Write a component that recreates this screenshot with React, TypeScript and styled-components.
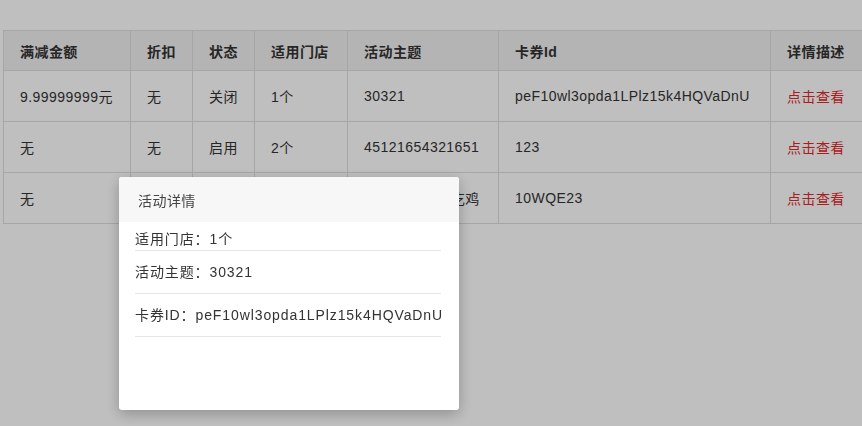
import styled, { createGlobalStyle } from 'styled-components';

const GlobalStyle = createGlobalStyle`
    html, body {
        margin: 0;
        padding: 0;
        background: #ffffff;
        overflow: hidden;
    }
    body {
        font-family: "Liberation Sans", "Noto Sans CJK SC", sans-serif;
        font-size: 14px;
        letter-spacing: 0.45px;
        color: #333333;
    }
`;

const Page = styled.div`
    width: 862px;
    height: 426px;
    padding-top: 30px;
    padding-left: 3px;
    box-sizing: border-box;
    overflow: hidden;
`;

const Table = styled.table`
    border-collapse: collapse;
    table-layout: fixed;
    width: 900px;
`;

const HeadCell = styled.th`
    height: 40px;
    padding: 0 16px;
    text-align: left;
    font-weight: bold;
    background: #f0f0f0;
    border: 1px solid #dedede;
    white-space: nowrap;
    overflow: hidden;
    box-sizing: border-box;
`;

const Cell = styled.td<{ $link?: boolean }>`
    height: 51px;
    padding: 0 16px;
    border: 1px solid #dedede;
    color: ${(p) => (p.$link ? '#e0282a' : '#333333')};
    white-space: nowrap;
    overflow: hidden;
    box-sizing: border-box;
`;

const Mask = styled.div`
    position: fixed;
    inset: 0;
    background: rgba(0, 0, 0, 0.25);
`;

const Modal = styled.div`
    position: fixed;
    left: 119px;
    top: 177px;
    width: 340px;
    height: 233px;
    background: #ffffff;
    border-radius: 3px;
    box-shadow: 0 4px 14px rgba(0, 0, 0, 0.25);
    overflow: hidden;
`;

const ModalHeader = styled.div`
    height: 45px;
    padding: 0 19px;
    display: flex;
    align-items: center;
    background: #f7f7f7;
    color: #444444;
`;

const ModalBody = styled.div`
    padding: 0 18px 0 16px;
`;

const Item = styled.div<{ $first?: boolean }>`
    padding: ${(p) => (p.$first ? '6px 0 0' : '10px 0')};
    line-height: 22px;
    letter-spacing: 0.9px;
    border-bottom: 1px solid #e6e6e6;
    color: #333333;
    white-space: nowrap;
`;

const widths = [127, 62, 62, 93, 151, 272, 133];
const headers = ['满减金额', '折扣', '状态', '适用门店', '活动主题', '卡券Id', '详情描述'];

const rows = [
    ['9.99999999元', '无', '关闭', '1个', '30321', 'peF10wl3opda1LPlz15k4HQVaDnU'],
    ['无', '无', '启用', '2个', '45121654321651', '123'],
    ['无', '无', '启用', '1个', '大吉大利今晚吃鸡', '10WQE23'],
];

export default function App() {
    return (
        <>
            <GlobalStyle />
            <Page>
                <Table>
                    <colgroup>
                        {widths.map((w, i) => (
                            <col key={i} style={{ width: w }} />
                        ))}
                    </colgroup>
                    <thead>
                        <tr>
                            {headers.map((h) => (
                                <HeadCell key={h}>{h}</HeadCell>
                            ))}
                        </tr>
                    </thead>
                    <tbody>
                        {rows.map((r, i) => (
                            <tr key={i}>
                                {r.map((c, j) => (
                                    <Cell key={j}>{c}</Cell>
                                ))}
                                <Cell $link>点击查看</Cell>
                            </tr>
                        ))}
                    </tbody>
                </Table>
            </Page>
            <Mask />
            <Modal>
                <ModalHeader>活动详情</ModalHeader>
                <ModalBody>
                    <Item $first>适用门店：1个</Item>
                    <Item>活动主题：30321</Item>
                    <Item>卡券ID：peF10wl3opda1LPlz15k4HQVaDnU</Item>
                </ModalBody>
            </Modal>
        </>
    );
}
